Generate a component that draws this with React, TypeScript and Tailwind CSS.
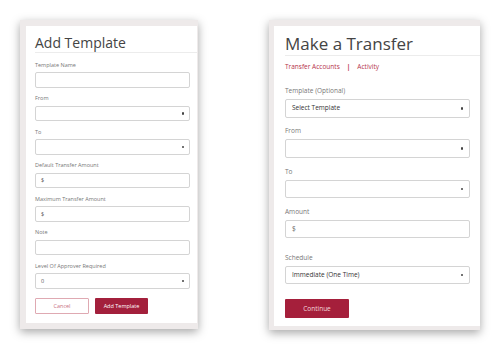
import React from 'react';

const font = { fontFamily: '"Open Sans", "Liberation Sans", sans-serif' };

function Caret() {
  return <span className="block w-[2.5px] h-[2.5px] bg-[#444] rounded-[1px]" />;
}

interface FieldProps {
  label: string;
  value?: string;
  select?: boolean;
  dark?: boolean;
}

function SmallField({ label, value, select }: FieldProps) {
  return (
    <div className="pb-[7.7px]">
      <div className="h-[7px] leading-[7px] text-[5.5px] text-[#777]">{label}</div>
      <div className="mt-[3.3px] h-[15.5px] border border-[#d4d4d4] rounded-[2px] flex items-center justify-between px-[5px] bg-white">
        <span className="text-[5.5px] text-[#555]">{value}</span>
        {select && <Caret />}
      </div>
    </div>
  );
}

function BigField({ label, value, select, dark }: FieldProps) {
  return (
    <div className="pb-[8.8px]">
      <div className="h-[10px] leading-[10px] text-[6.5px] text-[#777]">{label}</div>
      <div className="mt-[3px] h-[18.5px] border border-[#d4d4d4] rounded-[2px] flex items-center justify-between px-[6px] bg-white">
        <span className={dark ? 'text-[6.5px] text-[#333]' : 'text-[6.5px] text-[#666]'}>{value}</span>
        {select && <Caret />}
      </div>
    </div>
  );
}

export default function App() {
  return (
    <div className="w-[500px] h-[350px] bg-white relative" style={font}>
      <div className="flex items-start pt-[20px] pl-[20px] gap-[71px]">
        {/* Add Template card */}
        <div className="w-[178px] h-[309px] bg-[#eeeaea] pl-[6px] pt-[6px] pb-[6px] pr-[1px] shadow-[0_3px_9px_rgba(0,0,0,0.35)]">
          <div className="h-full bg-white pl-[9px]">
            <div className="pt-[8px] h-[27px] border-b border-[#ececec]">
              <div className="text-[14px] leading-[18px] text-[#444]">Add Template</div>
            </div>
            <div className="pr-[7px] pt-[9px]">
              <SmallField label="Template Name" />
              <SmallField label="From" select />
              <SmallField label="To" select />
              <SmallField label="Default Transfer Amount" value="$" />
              <SmallField label="Maximum Transfer Amount" value="$" />
              <SmallField label="Note" />
              <SmallField label="Level Of Approver Required" value="0" select />
              <div className="flex gap-[6px] pt-[1.5px]">
                <button className="w-[54px] h-[16px] border border-[#dfa9b2] rounded-[1px] text-[5.5px] text-[#c8707f] bg-white">Cancel</button>
                <button className="w-[53px] h-[16px] rounded-[1px] text-[5.5px] text-white bg-[#a3203c]">Add Template</button>
              </div>
            </div>
          </div>
        </div>

        {/* Make a Transfer card */}
        <div className="w-[211px] h-[310px] bg-[#eeeaea] pl-[5px] pt-[6px] pb-[4px] pr-0 shadow-[0_3px_9px_rgba(0,0,0,0.35)]">
          <div className="h-full bg-white pl-[11px]">
            <div className="pt-[7px] h-[30px] border-b border-[#ececec]">
              <div className="text-[17px] leading-[22px] text-[#444]">Make a Transfer</div>
            </div>
            <div className="pr-[10px]">
              <div className="pt-[6px] h-[16px] leading-[10px] text-[6.5px] text-[#b5324b] flex items-end">
                <span>Transfer Accounts</span>
                <span className="mx-[7px] text-[#b5324b] font-bold">|</span>
                <span>Activity</span>
              </div>
              <div className="pt-[14px]">
                <BigField label="Template (Optional)" value="Select Template" select dark />
                <BigField label="From" select />
                <BigField label="To" select />
                <BigField label="Amount" value="$" />
                <div className="pt-[5.4px]">
                  <BigField label="Schedule" value="Immediate (One Time)" select dark />
                </div>
                <button className="-mt-[0.5px] w-[64px] h-[19px] rounded-[1px] text-[6.5px] text-[#f3d7dc] bg-[#a51f3b]">Continue</button>
              </div>
            </div>
          </div>
        </div>
      </div>
    </div>
  );
}
